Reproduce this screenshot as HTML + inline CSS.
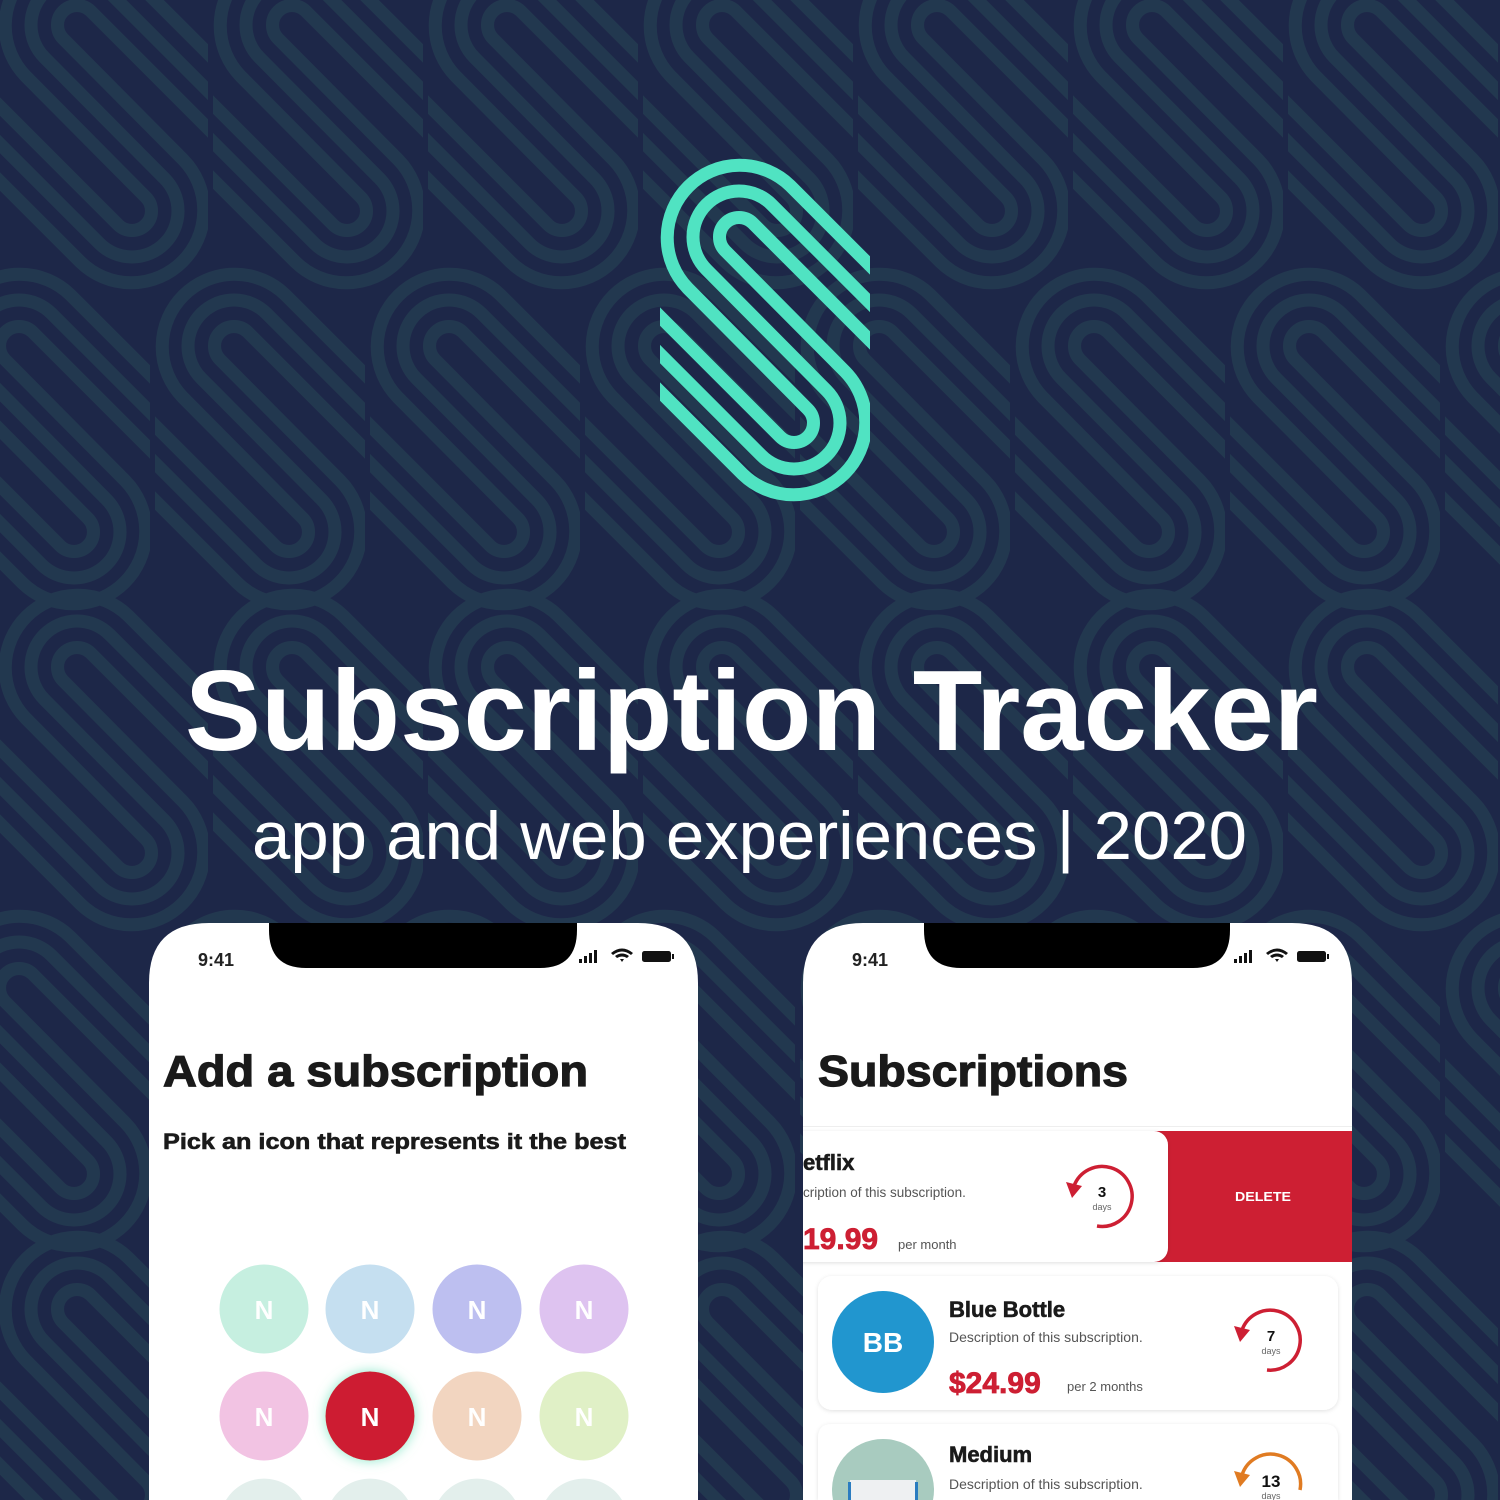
<!DOCTYPE html>
<html><head><meta charset="utf-8"><style>
html,body{margin:0;padding:0;background:#1d2748;width:1500px;height:1500px;overflow:hidden;}
svg{display:block}
.h{font-family:"Liberation Sans",sans-serif;font-weight:bold;}
</style></head><body>
<svg width="1500" height="1500" viewBox="0 0 1500 1500" xmlns="http://www.w3.org/2000/svg" style="overflow:hidden">
<defs>
<symbol id="s" viewBox="0 0 210 345" width="210" height="345">
<g fill="none" stroke-width="13">
<path d="M-94.1,139.5 L82.74,316.26 A72.5,72.5 0 0 0 185.26,213.74 L65.21,92.79 A19.5,19.5 0 0 1 92.79,65.21 L269.6,242"/>
<path d="M-75.3,120.7 L101.47,297.53 A46,46 0 0 0 166.53,232.47 L46.47,111.53 A46,46 0 0 1 111.53,46.47 L288.3,223.3"/>
<path d="M-56.6,102 L120.21,278.79 A19.5,19.5 0 0 0 147.79,251.21 L27.74,130.26 A72.5,72.5 0 0 1 130.26,27.74 L307,204.5"/>
</g>
</symbol>
<pattern id="bgp" patternUnits="userSpaceOnUse" x="0" y="0" width="215" height="642">
<g stroke="#22384f">
<use href="#s" x="-217" y="-696"/><use href="#s" x="-2" y="-696"/><use href="#s" x="213" y="-696"/>
<use href="#s" x="-217" y="-54"/><use href="#s" x="-2" y="-54"/><use href="#s" x="213" y="-54"/>
<use href="#s" x="-217" y="588"/><use href="#s" x="-2" y="588"/><use href="#s" x="213" y="588"/>
<use href="#s" x="-60" y="-375"/><use href="#s" x="155" y="-375"/><use href="#s" x="370" y="-375"/>
<use href="#s" x="-60" y="267"/><use href="#s" x="155" y="267"/><use href="#s" x="370" y="267"/>
<use href="#s" x="-275" y="267"/><use href="#s" x="-275" y="-375"/>
</g>
</pattern>
<filter id="sh" x="-10%" y="-10%" width="120%" height="120%"><feDropShadow dx="0" dy="1" stdDeviation="2" flood-color="#000" flood-opacity="0.12"/></filter>
<filter id="glow" x="-50%" y="-50%" width="200%" height="200%"><feDropShadow dx="0" dy="0" stdDeviation="6" flood-color="#7fe6c4" flood-opacity="0.9"/></filter>
<clipPath id="lp"><path d="M149,1500 L149,983 Q149,923 209,923 L638,923 Q698,923 698,983 L698,1500 Z"/></clipPath>
<clipPath id="rp"><path d="M803,1500 L803,983 Q803,923 863,923 L1292,923 Q1352,923 1352,983 L1352,1500 Z"/></clipPath>
</defs>
<rect width="1500" height="1500" fill="#1d2748"/>
<rect width="1500" height="1500" fill="url(#bgp)"/>
<g stroke="#50e3c2"><use href="#s" x="660" y="158"/></g>

<text class="h" x="185" y="750" font-size="114" fill="#fff" textLength="1133" lengthAdjust="spacingAndGlyphs">Subscription Tracker</text>
<text x="252" y="859" font-family="Liberation Sans,sans-serif" font-size="68" fill="#fff" textLength="995" lengthAdjust="spacingAndGlyphs">app and web experiences | 2020</text>

<g clip-path="url(#lp)">
<rect x="149" y="923" width="549" height="577" fill="#fff"/>
<path d="M269,920 L577,920 L577,930 Q577,968 540,968 L306,968 Q269,968 269,930 Z" fill="#000"/>
<text class="h" x="198" y="966" font-size="18" fill="#222">9:41</text>
<g fill="#111">
<rect x="579" y="959" width="3" height="4"/><rect x="584" y="956" width="3" height="7"/><rect x="589" y="953" width="3" height="10"/><rect x="594" y="950" width="3" height="13"/>
<path d="M611,953 Q622,944 633,953 L631,955 Q622,948 613,955Z M615,956 Q622,951 629,956 L627,958 Q622,955 617,958Z M620,959 L624,959 L622,962Z"/>
<rect x="642" y="951" width="29" height="11" rx="2.5"/><rect x="672" y="954" width="2" height="5"/>
</g>
<text class="h" x="163" y="1086" font-size="44" fill="#1a1a1a" textLength="425" lengthAdjust="spacingAndGlyphs" stroke="#1a1a1a" stroke-width="1.2">Add a subscription</text>
<text class="h" x="163" y="1149" font-size="22" fill="#1a1a1a" textLength="463" lengthAdjust="spacingAndGlyphs" stroke="#1a1a1a" stroke-width="0.6">Pick an icon that represents it the best</text>
<g class="h" font-size="26" fill="#fff" text-anchor="middle">
<circle cx="264" cy="1309" r="44.5" fill="#c6efe0"/><text x="264" y="1319">N</text>
<circle cx="370" cy="1309" r="44.5" fill="#c5dff0"/><text x="370" y="1319">N</text>
<circle cx="477" cy="1309" r="44.5" fill="#bdbff0"/><text x="477" y="1319">N</text>
<circle cx="584" cy="1309" r="44.5" fill="#dec3f0"/><text x="584" y="1319">N</text>
<circle cx="264" cy="1416" r="44.5" fill="#f2c3e3"/><text x="264" y="1426">N</text>
<circle cx="370" cy="1416" r="44.5" fill="#cd1f33" filter="url(#glow)"/><text x="370" y="1426">N</text>
<circle cx="477" cy="1416" r="44.5" fill="#f2d5c0"/><text x="477" y="1426">N</text>
<circle cx="584" cy="1416" r="44.5" fill="#e0f0c6"/><text x="584" y="1426">N</text>
<path d="M226,1500 A44.5,44.5 0 0 1 302,1500 Z M332,1500 A44.5,44.5 0 0 1 408,1500 Z M439,1500 A44.5,44.5 0 0 1 515,1500 Z M546,1500 A44.5,44.5 0 0 1 622,1500 Z" fill="#e3efec"/>
</g>
</g>

<g clip-path="url(#rp)">
<rect x="803" y="923" width="549" height="577" fill="#fff"/>
<path d="M924,920 L1230,920 L1230,930 Q1230,968 1193,968 L961,968 Q924,968 924,930 Z" fill="#000"/>
<text class="h" x="852" y="966" font-size="18" fill="#222">9:41</text>
<g fill="#111" transform="translate(655,0)">
<rect x="579" y="959" width="3" height="4"/><rect x="584" y="956" width="3" height="7"/><rect x="589" y="953" width="3" height="10"/><rect x="594" y="950" width="3" height="13"/>
<path d="M611,953 Q622,944 633,953 L631,955 Q622,948 613,955Z M615,956 Q622,951 629,956 L627,958 Q622,955 617,958Z M620,959 L624,959 L622,962Z"/>
<rect x="642" y="951" width="29" height="11" rx="2.5"/><rect x="672" y="954" width="2" height="5"/>
</g>
<text class="h" x="818" y="1086" font-size="44" fill="#1a1a1a" textLength="310" lengthAdjust="spacingAndGlyphs" stroke="#1a1a1a" stroke-width="1.2">Subscriptions</text>

<rect x="803" y="1126" width="549" height="1" fill="#eee"/>
<rect x="1150" y="1131" width="202" height="131" fill="#cd1f33"/>
<text class="h" x="1263" y="1201" font-size="13" fill="#fff" text-anchor="middle" textLength="56" lengthAdjust="spacingAndGlyphs">DELETE</text>
<rect x="760" y="1131" width="408" height="131" rx="14" fill="#fff" filter="url(#sh)"/>
<text class="h" x="803" y="1170" font-size="22" fill="#1a1a1a" stroke="#1a1a1a" stroke-width="0.6">etflix</text>
<text x="803" y="1197" font-family="Liberation Sans,sans-serif" font-size="13.5" fill="#555">cription of this subscription.</text>
<text class="h" x="803" y="1249" font-size="30" fill="#cd1f33" stroke="#cd1f33" stroke-width="0.8">19.99</text>
<text x="898" y="1249" font-family="Liberation Sans,sans-serif" font-size="13" fill="#555">per month</text>

<rect x="818" y="1276" width="520" height="134" rx="14" fill="#fff" filter="url(#sh)"/>
<circle cx="883" cy="1342" r="51" fill="#2196cf"/>
<text class="h" x="883" y="1352" font-size="28" fill="#fff" text-anchor="middle">BB</text>
<text class="h" x="949" y="1317" font-size="22" fill="#1a1a1a" stroke="#1a1a1a" stroke-width="0.6">Blue Bottle</text>
<text x="949" y="1342" font-family="Liberation Sans,sans-serif" font-size="14" fill="#555">Description of this subscription.</text>
<text class="h" x="949" y="1393" font-size="30" fill="#cd1f33" stroke="#cd1f33" stroke-width="0.8">$24.99</text>
<text x="1067" y="1391" font-family="Liberation Sans,sans-serif" font-size="13" fill="#555">per 2 months</text>

<path d="M818,1500 L818,1438 Q818,1424 832,1424 L1324,1424 Q1338,1424 1338,1438 L1338,1500 Z" fill="#fff" filter="url(#sh)"/>
<path d="M833,1500 A51,51 0 1 1 933,1500 Z" fill="#a8cbbf"/>
<rect x="850" y="1480" width="66" height="20" fill="#eef0f2"/><rect x="848" y="1482" width="3" height="18" fill="#2b7cc0"/><rect x="915" y="1482" width="3" height="18" fill="#2b7cc0"/>
<text class="h" x="949" y="1462" font-size="22" fill="#1a1a1a" stroke="#1a1a1a" stroke-width="0.6">Medium</text>
<text x="949" y="1489" font-family="Liberation Sans,sans-serif" font-size="14" fill="#555">Description of this subscription.</text>

<g fill="none" stroke-width="3.5">
<path d="M1074,1186 A30,30 0 1 1 1097,1226" stroke="#cd1f33"/>
<path d="M1242,1330 A30,30 0 1 1 1267,1370" stroke="#cd1f33"/>
<path d="M1242,1475 A30,30 0 0 1 1300,1490" stroke="#e07b22"/>
</g>
<path d="M1066,1182 L1082,1186 L1072,1198 Z" fill="#cd1f33"/>
<path d="M1234,1326 L1250,1330 L1240,1342 Z" fill="#cd1f33"/>
<path d="M1234,1471 L1250,1475 L1240,1487 Z" fill="#e07b22"/>
<g class="h" text-anchor="middle" fill="#111">
<text x="1102" y="1197" font-size="15">3</text>
<text x="1271" y="1341" font-size="15">7</text>
<text x="1271" y="1487" font-size="17">13</text>
</g>
<g font-family="Liberation Sans,sans-serif" text-anchor="middle" fill="#666" font-size="9">
<text x="1102" y="1210">days</text>
<text x="1271" y="1354">days</text>
<text x="1271" y="1499">days</text>
</g>
</g>
</svg>
</body></html>
